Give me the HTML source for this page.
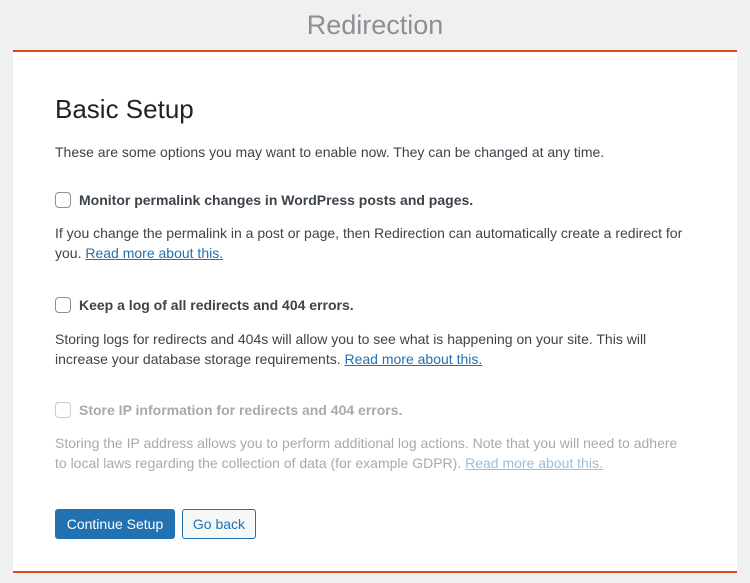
<!DOCTYPE html>
<html><head><style>
body{margin:0;width:750px;height:583px;background:#f0f0f1;font-family:"Liberation Sans",sans-serif;position:relative;overflow:hidden;color:#3c434a}
.t{position:absolute;white-space:nowrap}
h1{position:absolute;margin:0;left:0;width:750px;top:10px;text-align:center;font-weight:300;font-size:27px;color:#8c8f94}
.panel{position:absolute;left:13px;top:50px;width:724px;height:519px;background:#fff;border-top:2px solid #d54e21;border-bottom:2px solid #d54e21}
.h2{font-size:26px;color:#1d2327;left:55px;top:94px}
.body{font-size:14px;line-height:20px}
.cb{position:absolute;left:55px;width:14px;height:14px;border:1px solid #8c8f94;border-radius:4px;background:#fff}
.lab{font-weight:bold;font-size:14px;color:#3c434a}
a{color:#2271b1;text-decoration:underline}
.dis{opacity:.45}
.btn{position:absolute;top:509px;height:30px;border-radius:3px;font-size:14px;line-height:28px;text-align:center;box-sizing:border-box}
</style></head><body>
<h1>Redirection</h1>
<div class="panel"></div>
<div class="t h2">Basic Setup</div>
<div class="t body" style="left:55px;top:142px">These are some options you may want to enable now. They can be changed at any time.</div>

<div class="cb" style="top:192px"></div>
<div class="t lab" style="left:79px;top:192px">Monitor permalink changes in WordPress posts and pages.</div>
<div class="t body" style="left:55px;top:223px">If you change the permalink in a post or page, then Redirection can automatically create a redirect for<br>you. <a>Read more about this.</a></div>

<div class="cb" style="top:297px"></div>
<div class="t lab" style="left:79px;top:297px">Keep a log of all redirects and 404 errors.</div>
<div class="t body" style="left:55px;top:329px">Storing logs for redirects and 404s will allow you to see what is happening on your site. This will<br>increase your database storage requirements. <a>Read more about this.</a></div>

<div class="dis">
<div class="cb" style="top:402px"></div>
<div class="t lab" style="left:79px;top:402px">Store IP information for redirects and 404 errors.</div>
<div class="t body" style="left:55px;top:433px">Storing the IP address allows you to perform additional log actions. Note that you will need to adhere<br>to local laws regarding the collection of data (for example GDPR). <a>Read more about this.</a></div>
</div>

<div class="btn" style="left:55px;width:120px;background:#2271b1;color:#fff;border:1px solid #2271b1">Continue Setup</div>
<div class="btn" style="left:182px;width:74px;background:#f6f7f7;color:#2271b1;border:1px solid #2271b1">Go back</div>
</body></html>
